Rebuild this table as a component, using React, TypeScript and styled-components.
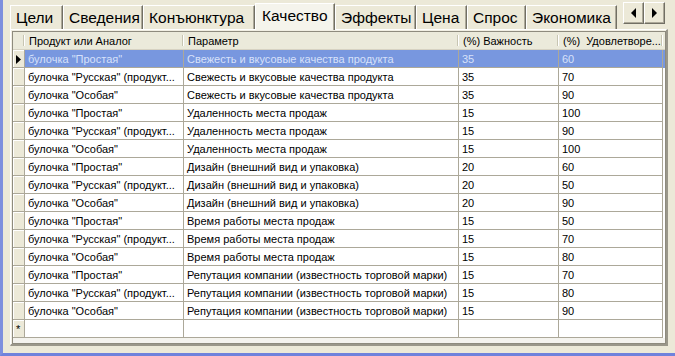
import React from "react";
import styled, { createGlobalStyle } from "styled-components";

const Global = createGlobalStyle`
  html, body { margin: 0; padding: 0; background: #ECE9D8; }
  body { font-family: "Liberation Sans", Arial, sans-serif; }
  * { box-sizing: border-box; }
`;

const Window = styled.div`
  width: 675px;
  height: 356px;
  border-left: 3px solid #7d8fde;
  border-bottom: 3px solid #6f82dc;
  background: #ECE9D8;
  display: flex;
  flex-direction: column;
  padding: 0 7px 7px 7px;
  overflow: hidden;
`;

const TabStrip = styled.div`
  height: 29px;
  display: flex;
  align-items: flex-end;
  flex-shrink: 0;
`;

const Tab = styled.div<{ $w: number; $active?: boolean }>`
  width: ${(p) => p.$w}px;
  height: ${(p) => (p.$active ? 27 : 24)}px;
  margin-bottom: ${(p) => (p.$active ? -1 : 0)}px;
  position: relative;
  z-index: ${(p) => (p.$active ? 2 : 1)};
  flex-shrink: 0;
  background: ${(p) => (p.$active ? "#F5F4EC" : "#ECE9D8")};
  border-top: 1px solid #fff;
  border-left: 1px solid #fff;
  border-right: 1px solid #716F64;
  box-shadow: inset -1px 0 0 #ACA899;
  font-size: 15.5px;
  color: #000;
  display: flex;
  align-items: center;
  padding-left: ${(p) => (p.$active ? 6 : 5)}px;
  padding-bottom: ${(p) => (p.$active ? 2 : 0)}px;
  white-space: nowrap;
`;

const ArrowGroup = styled.div`
  display: flex;
  align-self: flex-start;
  margin: 2px 3px 0 auto;
`;

const ArrowButton = styled.div`
  width: 21px;
  height: 22px;
  background: #ECE9D8;
  border-top: 1px solid #fff;
  border-left: 1px solid #fff;
  border-right: 1px solid #716F64;
  border-bottom: 1px solid #716F64;
  box-shadow: inset -1px -1px 0 #ACA899;
  display: flex;
  align-items: center;
  justify-content: center;
`;

const Panel = styled.div`
  flex: 1;
  display: flex;
  border-top: 1px solid #fff;
  border-left: 1px solid #fff;
  border-right: 2px solid #9a978a;
  border-bottom: 2px solid #9a978a;
  padding: 1px 0 0 1px;
  background: #F1EFE4;
`;

const Grid = styled.div`
  flex: 1;
  border: 1px solid #8e8b7e;
  background: #F4F3EE;
  overflow: hidden;
`;

const COLS = "12px 159px 275px 100px 104px";

const HeaderRow = styled.div`
  display: grid;
  grid-template-columns: ${COLS};
  height: 18px;
  background: #EBEADB;
  box-shadow: inset 0 -1px 0 #D6D2C2;
`;

const HeaderCell = styled.div`
  position: relative;
  font-size: 11px;
  line-height: 19px;
  padding-left: 4px;
  color: #000;
  white-space: nowrap;
  overflow: hidden;
  &::after {
    content: "";
    position: absolute;
    right: 1px;
    top: 3px;
    bottom: 4px;
    width: 1px;
    background: #C7C5B2;
    box-shadow: 1px 0 0 #fff;
  }
`;

const Row = styled.div<{ $selected?: boolean }>`
  display: grid;
  grid-template-columns: ${COLS};
  height: 18px;
  background: ${(p) => (p.$selected ? "#7897DF" : "#fff")};
  color: ${(p) => (p.$selected ? "#D7E1FA" : "#000")};
`;

const RowHeader = styled.div`
  background: #ECE9D8;
  border-right: 1px solid #ACA899;
  border-bottom: 1px solid #ACA899;
  box-shadow: inset 1px 1px 0 #fff;
  display: flex;
  align-items: center;
  padding-left: 3px;
  padding-top: 1px;
  font-size: 11px;
  color: #000;
`;

const Cell = styled.div`
  border-right: 1px solid #ACA899;
  border-bottom: 1px solid #ACA899;
  font-size: 11px;
  line-height: 19px;
  padding-left: 3px;
  white-space: nowrap;
  overflow: hidden;
`;

const Arrow = ({ dir, w, h }: { dir: "left" | "right"; w: number; h: number }) => (
  <svg width={w} height={h} viewBox={`0 0 ${w} ${h}`}>
    {dir === "right" ? (
      <polygon points={`0,0 ${w},${h / 2} 0,${h}`} fill="#000" />
    ) : (
      <polygon points={`${w},0 0,${h / 2} ${w},${h}`} fill="#000" />
    )}
  </svg>
);

const tabs: { label: string; w: number; active?: boolean }[] = [
  { label: "Цели", w: 53 },
  { label: "Сведения", w: 80 },
  { label: "Конъюнктура", w: 112 },
  { label: "Качество", w: 80, active: true },
  { label: "Эффекты", w: 81 },
  { label: "Цена", w: 51 },
  { label: "Спрос", w: 59 },
  { label: "Экономика", w: 91 },
];

const P = 'булочка "Простая"';
const R = 'булочка "Русская" (продукт...';
const O = 'булочка "Особая"';
const rows: [string, string, string, string][] = [
  [P, "Свежесть и вкусовые качества продукта", "35", "60"],
  [R, "Свежесть и вкусовые качества продукта", "35", "70"],
  [O, "Свежесть и вкусовые качества продукта", "35", "90"],
  [P, "Удаленность места продаж", "15", "100"],
  [R, "Удаленность места продаж", "15", "90"],
  [O, "Удаленность места продаж", "15", "100"],
  [P, "Дизайн (внешний вид и упаковка)", "20", "60"],
  [R, "Дизайн (внешний вид и упаковка)", "20", "50"],
  [O, "Дизайн (внешний вид и упаковка)", "20", "90"],
  [P, "Время работы места продаж", "15", "50"],
  [R, "Время работы места продаж", "15", "70"],
  [O, "Время работы места продаж", "15", "80"],
  [P, "Репутация компании (известность торговой марки)", "15", "70"],
  [R, "Репутация компании (известность торговой марки)", "15", "80"],
  [O, "Репутация компании (известность торговой марки)", "15", "90"],
];

export default function App() {
  return (
    <>
      <Global />
      <Window>
        <TabStrip>
          {tabs.map((t) => (
            <Tab key={t.label} $w={t.w} $active={t.active}>
              {t.label}
            </Tab>
          ))}
          <ArrowGroup>
            <ArrowButton>
              <Arrow dir="left" w={5} h={10} />
            </ArrowButton>
            <ArrowButton>
              <Arrow dir="right" w={5} h={10} />
            </ArrowButton>
          </ArrowGroup>
        </TabStrip>
        <Panel>
          <Grid>
            <HeaderRow>
              <HeaderCell />
              <HeaderCell>Продукт или Аналог</HeaderCell>
              <HeaderCell>Параметр</HeaderCell>
              <HeaderCell>(%) Важность</HeaderCell>
              <HeaderCell>(%) &nbsp;Удовлетворе...</HeaderCell>
            </HeaderRow>
            {rows.map((r, i) => (
              <Row key={i} $selected={i === 0}>
                <RowHeader>{i === 0 && <Arrow dir="right" w={5} h={9} />}</RowHeader>
                <Cell>{r[0]}</Cell>
                <Cell>{r[1]}</Cell>
                <Cell>{r[2]}</Cell>
                <Cell>{r[3]}</Cell>
              </Row>
            ))}
            <Row>
              <RowHeader>*</RowHeader>
              <Cell />
              <Cell />
              <Cell />
              <Cell />
            </Row>
          </Grid>
        </Panel>
      </Window>
    </>
  );
}
